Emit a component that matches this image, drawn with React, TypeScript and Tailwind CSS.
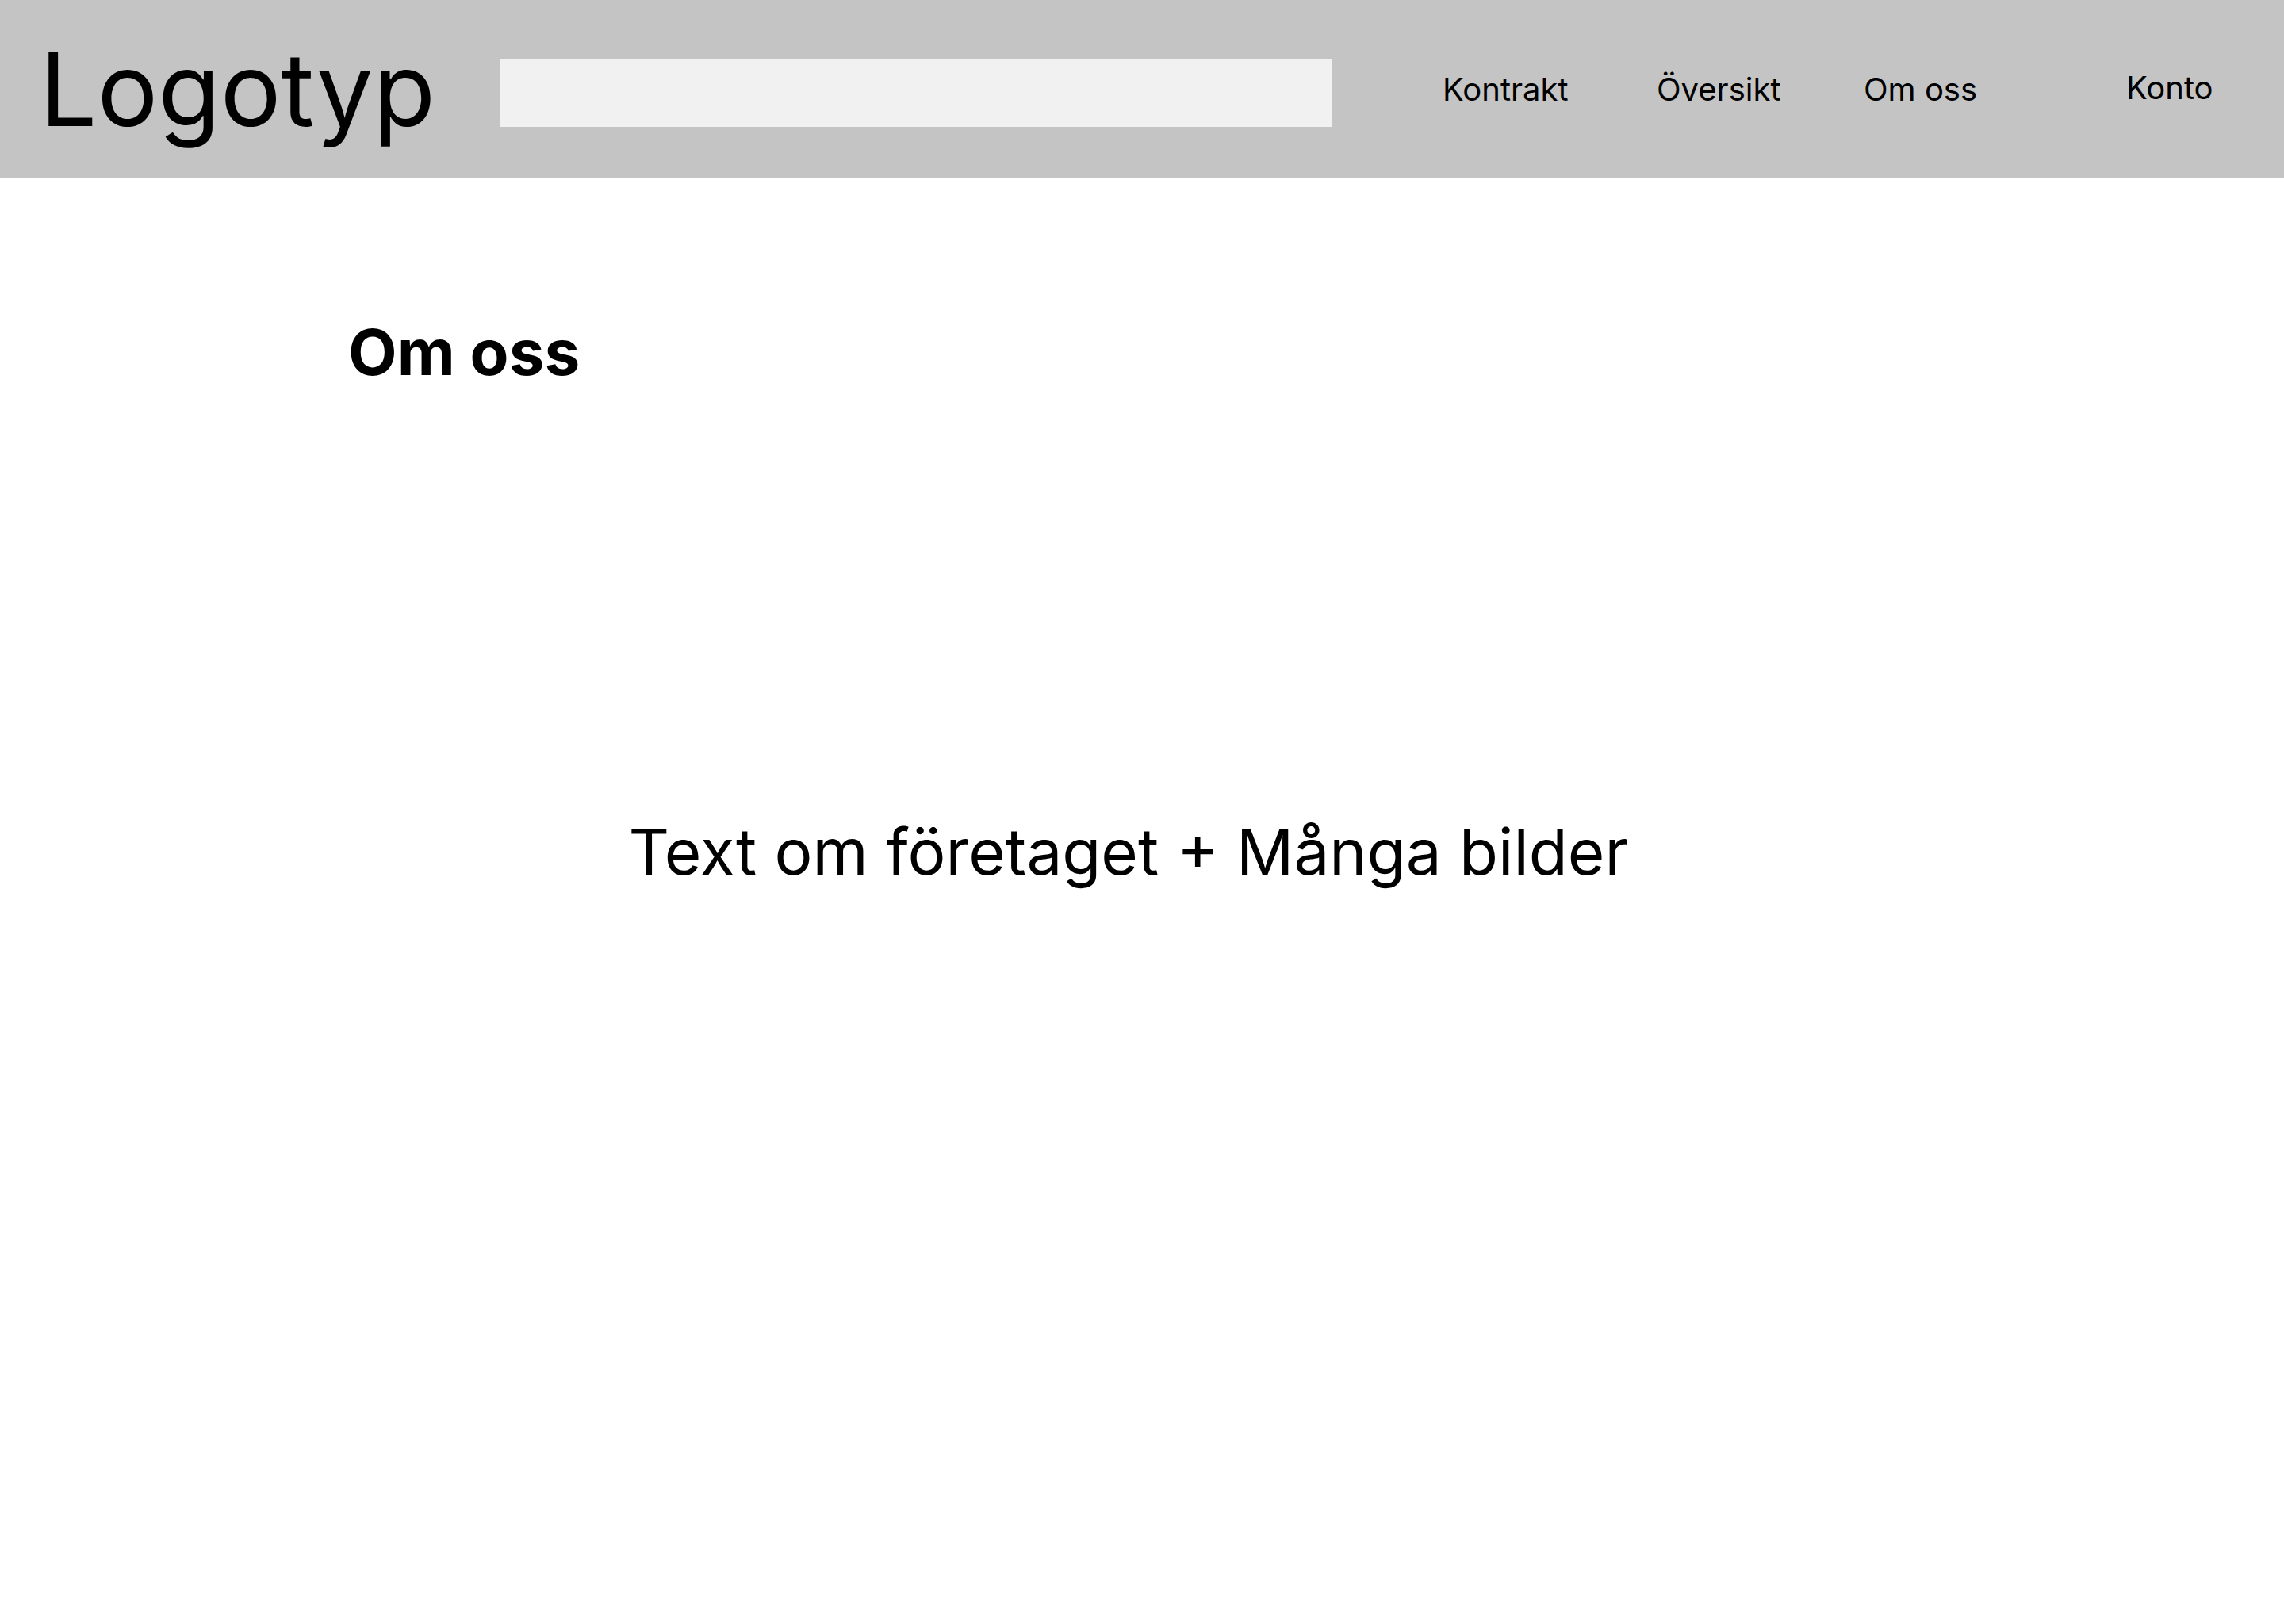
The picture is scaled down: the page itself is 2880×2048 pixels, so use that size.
const NAV_ITEMS = [
  { label: 'Kontrakt', className: 'w-[270px] mt-[93px]' },
  { label: 'Översikt', className: 'w-[261px] mt-[93px]' },
  { label: 'Om oss', className: 'w-[331px] mt-[93px]' },
  { label: 'Konto', className: 'mt-[91px]' },
]

export default function App() {
  return (
    <div className="min-h-screen bg-white text-black font-['Inter',sans-serif]">
      {/* Header */}
      <header className="h-[224px] bg-[#c4c4c4] flex items-start pl-[50px]">
        <div className="w-[580px] mt-[49px] text-[128px] leading-none">Logotyp</div>
        <div className="w-[1050px] h-[86px] mt-[74px] bg-[#f1f1f1]" />
        <nav className="flex items-start ml-[139px] text-[40px] leading-none">
          {NAV_ITEMS.map((item) => (
            <a key={item.label} href="#" className={item.className}>
              {item.label}
            </a>
          ))}
        </nav>
      </header>

      {/* Content */}
      <main className="pl-[439px] pt-[180px]">
        <h1 className="text-[80px] leading-none font-bold">Om oss</h1>
      </main>
      <div className="flex justify-center pr-[34px] mt-[550px]">
        <p className="text-[80px] leading-none">Text om företaget + Många bilder</p>
      </div>
    </div>
  )
}
